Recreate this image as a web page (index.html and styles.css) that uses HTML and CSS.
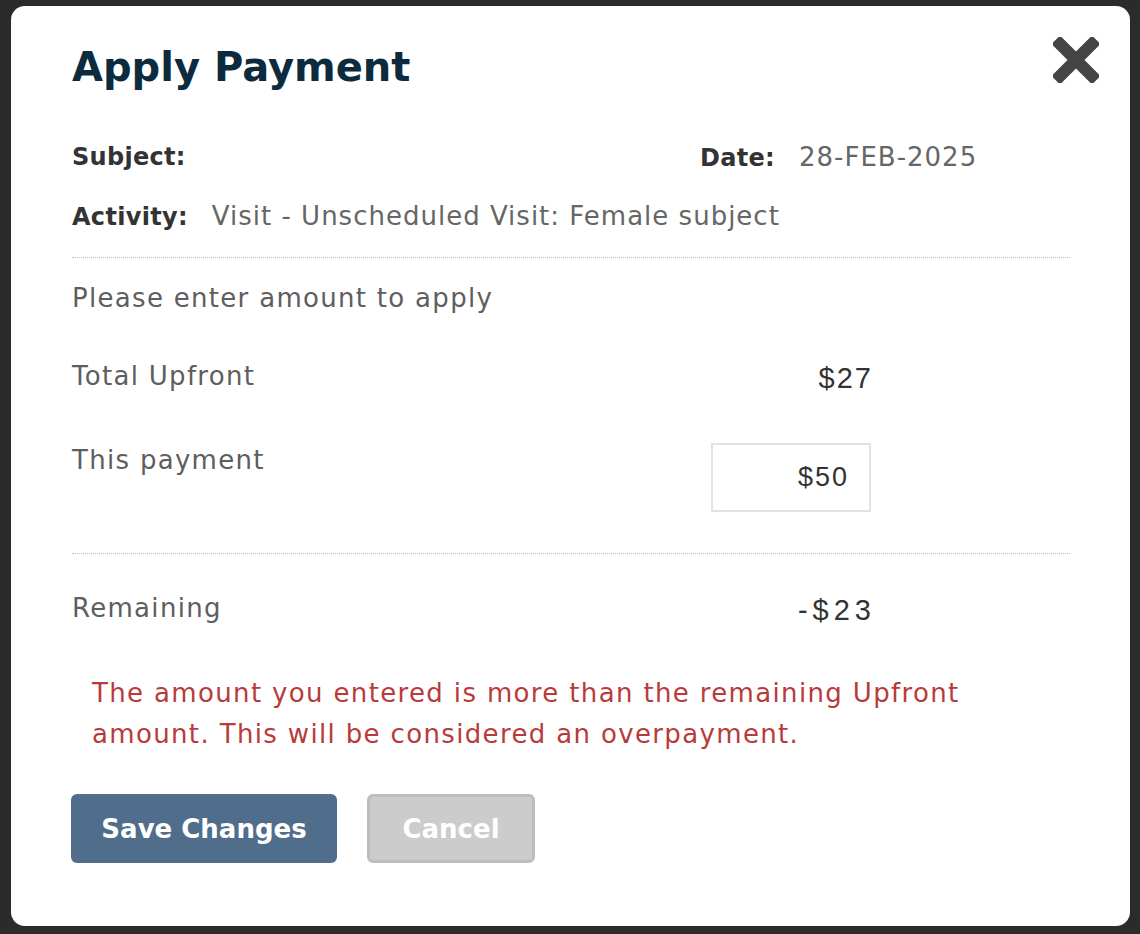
FILE: index.html
```html
<!DOCTYPE html>
<html>
<head>
<meta charset="utf-8">
<link rel="stylesheet" href="styles.css">
</head>
<body>
<div class="modal">
  <div class="header">
    <h1 class="title">Apply Payment</h1>
    <button class="close" aria-label="Close">
      <svg width="46" height="46" viewBox="0 0 46 46"><path d="M7 7 L39 39 M39 7 L7 39" stroke="#444" stroke-width="12" stroke-linecap="square" fill="none"/></svg>
    </button>
  </div>
  <div class="info">
    <div class="info-row">
      <div class="info-item subject"><span class="lbl">Subject:</span></div>
      <div class="info-item date"><span class="lbl">Date:</span><span class="val">28-FEB-2025</span></div>
    </div>
    <div class="info-row">
      <div class="info-item"><span class="lbl">Activity:</span><span class="val">Visit - Unscheduled Visit: Female subject</span></div>
    </div>
  </div>
  <hr class="dots">
  <div class="prompt">Please enter amount to apply</div>
  <div class="amounts">
    <div class="amt-row">
      <span class="amt-label">Total Upfront</span>
      <span class="amt-val">$27</span>
    </div>
    <div class="amt-row pay">
      <span class="amt-label">This payment</span>
      <div class="amt-input">$50</div>
    </div>
  </div>
  <hr class="dots dots2">
  <div class="amt-row remain">
    <span class="amt-label">Remaining</span>
    <span class="amt-val neg">-$23</span>
  </div>
  <div class="warning">The amount you entered is more than the remaining Upfront amount. This will be considered an overpayment.</div>
  <div class="actions">
    <button class="btn btn-save">Save Changes</button>
    <button class="btn btn-cancel">Cancel</button>
  </div>
</div>
</body>
</html>
```
FILE: styles.css
```css
html, body {
  margin: 0;
  padding: 0;
  background: #2b2b2b;
}
body {
  font-family: "DejaVu Sans", sans-serif;
  width: 1140px;
  height: 934px;
  overflow: hidden;
}
.modal {
  box-sizing: border-box;
  margin: 6px 0 0 11px;
  width: 1119px;
  height: 920px;
  background: #fff;
  border-radius: 14px;
  padding: 0 60px 0 61px;
}
.header {
  display: flex;
  justify-content: space-between;
  align-items: flex-start;
  padding-top: 30px;
  height: 90px;
  margin-right: -29px;
}
.title {
  margin: 0;
  font-size: 40px;
  line-height: 62px;
  font-weight: 600;
  color: #0d2b3e;
}
.close {
  border: 0;
  background: none;
  padding: 0;
  margin-top: 1px;
  width: 46px;
  height: 46px;
  filter: blur(0.6px);
}
.close svg { display: block; }
.info {
  margin-top: 14px;
  display: flex;
  flex-direction: column;
  gap: 25px;
}
.info-row {
  display: flex;
  height: 34px;
  align-items: center;
}
.info-item.subject { width: 628px; }
.lbl {
  font-size: 24px;
  font-weight: 600;
  color: #333;
  letter-spacing: 0.3px;
  margin-right: 24px;
}
.val {
  font-size: 26px;
  color: #666;
  font-weight: 400;
  letter-spacing: 1px;
}
.dots {
  margin: 24px 0 0;
  border: 0;
  border-top: 1px dotted #bdbdbd;
  height: 0;
}
.prompt {
  margin-top: 23px;
  line-height: 34px;
  font-size: 26px;
  letter-spacing: 1.3px;
  color: #5e5e5e;
}
.amounts {
  width: 799px;
  margin-top: 44px;
  display: flex;
  flex-direction: column;
  gap: 46px;
}
.amt-row {
  display: flex;
  justify-content: space-between;
  align-items: flex-start;
  width: 799px;
}
.amt-label {
  font-size: 26px;
  letter-spacing: 1.3px;
  line-height: 34px;
  color: #5e5e5e;
}
.amt-val {
  font-family: "Liberation Sans", Arial, sans-serif;
  font-size: 29px;
  line-height: 38px;
  color: #333;
  letter-spacing: 2px;
  margin-right: -2px;
}
.amt-val.neg { letter-spacing: 5px; margin-right: -5px; }
.amt-input {
  box-sizing: border-box;
  width: 160px;
  height: 69px;
  border: 2px solid #e2e2e2;
  text-align: right;
  padding-right: 20px;
  font-family: "Liberation Sans", Arial, sans-serif;
  font-size: 27px;
  line-height: 65px;
  color: #333;
  letter-spacing: 2px;
}
.dots2 { margin-top: 41px; }
.remain { margin-top: 37px; }
.warning {
  margin-top: 44px;
  padding: 0 20px;
  font-size: 26px;
  letter-spacing: 1.35px;
  line-height: 41px;
  color: #b83b3b;
}
.actions {
  margin-top: 39px;
  display: flex;
  gap: 30px;
  margin-left: -1px;
}
.btn {
  box-sizing: border-box;
  height: 69px;
  border-radius: 6px;
  font-family: "DejaVu Sans", sans-serif;
  font-size: 26px;
  font-weight: 600;
  color: #fff;
  padding: 0;
}
.btn-save {
  width: 266px;
  background: #516d8c;
  border: 0;
}
.btn-cancel {
  width: 168px;
  background: #cccccc;
  border: 3px solid #bdbdbd;
}
```
